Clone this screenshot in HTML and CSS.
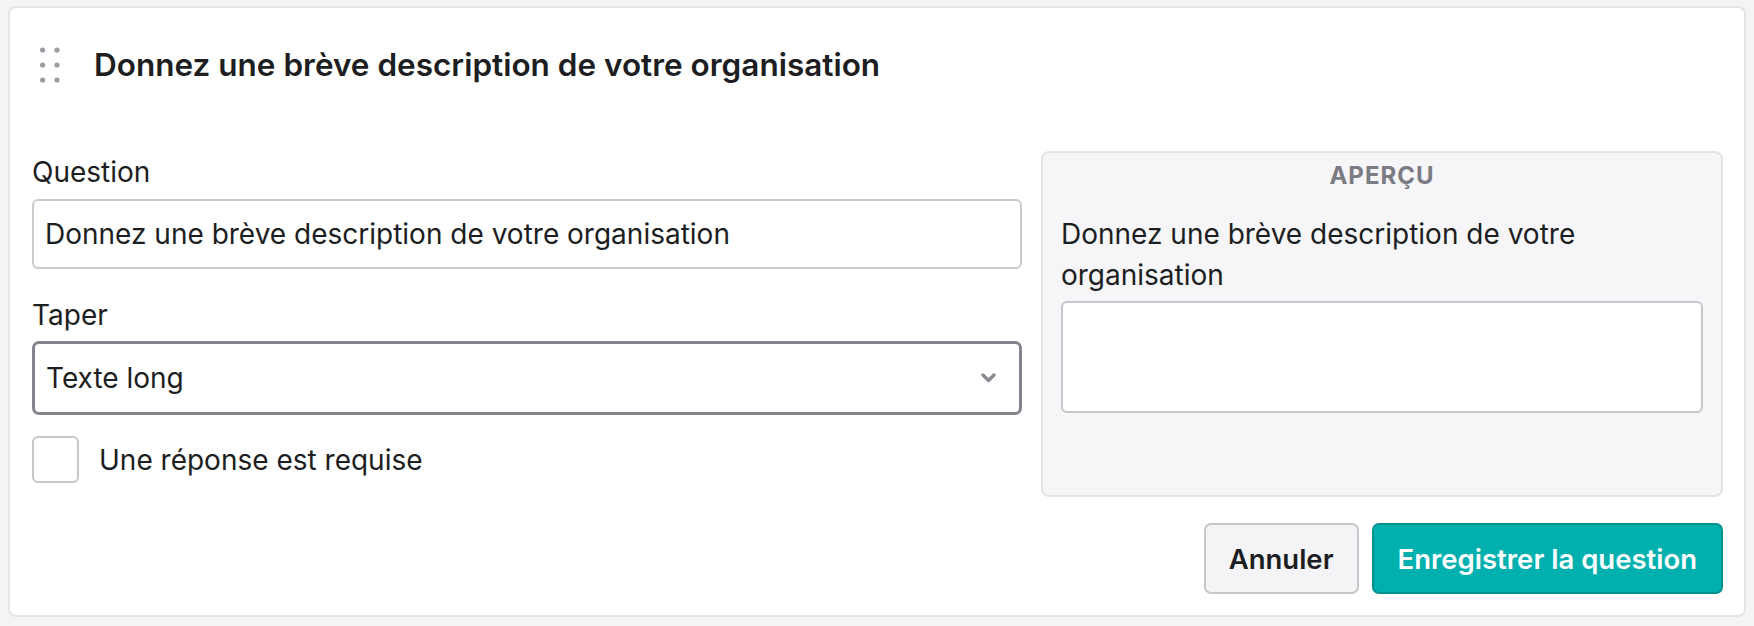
FILE: index.html
```html
<!DOCTYPE html>
<html lang="fr">
<head>
    <meta charset="UTF-8">
    <meta name="viewport" content="width=device-width, initial-scale=1.0">
    <title>Modifier la question</title>
    <link rel="stylesheet" href="styles.css">
</head>
<body>
    <div class="card">
        <div class="card-header">
            <!-- drag handle -->
            <svg class="handle" width="20" height="36" viewBox="0 0 20 36">
                <circle cx="2.6" cy="3" r="2.6"/>
                <circle cx="17" cy="3" r="2.6"/>
                <circle cx="2.6" cy="18" r="2.6"/>
                <circle cx="17" cy="18" r="2.6"/>
                <circle cx="2.6" cy="33" r="2.6"/>
                <circle cx="17" cy="33" r="2.6"/>
            </svg>
            <h2 class="card-title">Donnez une brève description de votre organisation</h2>
        </div>

        <div class="editor">
            <div class="fields">
                <label class="field-label" for="question">Question</label>
                <input class="text-input" id="question" type="text" value="Donnez une brève description de votre organisation">

                <label class="field-label type-label" for="type">Taper</label>
                <div class="select">
                    <span>Texte long</span>
                    <svg class="chevron" width="15" height="10" viewBox="0 0 15 10">
                        <path d="M2 2 L7.5 7.5 L13 2" fill="none" stroke="currentColor" stroke-width="3.4" stroke-linecap="round" stroke-linejoin="round"/>
                    </svg>
                </div>

                <label class="check-row">
                    <span class="checkbox"></span>
                    <span>Une réponse est requise</span>
                </label>
            </div>

            <div class="preview">
                <div class="preview-title">APERÇU</div>
                <p class="preview-question">Donnez une brève description de votre organisation</p>
                <div class="preview-area"></div>
            </div>
        </div>

        <div class="actions">
            <button class="btn btn-cancel">Annuler</button>
            <button class="btn btn-save">Enregistrer la question</button>
        </div>
    </div>
</body>
</html>
```

FILE: styles.css
```css
body {
    margin: 0;
    padding: 6px 8px 0;
    background: #f4f4f6;
    font-family: 'Inter', 'Noto Sans', sans-serif;
    color: #1d1e22;
}

.card {
    background: #fff;
    border: 2px solid #e4e4e7;
    border-radius: 8px;
    padding: 0 21px 21px 22px;
}

.card-header {
    display: flex;
    align-items: center;
    padding: 33px 0;
}

.handle {
    fill: #9b9ba3;
    margin-left: 8px;
    flex-shrink: 0;
}

.card-title {
    margin: 0 0 0 34px;
    font-size: 31.5px;
    line-height: 48px;
    font-weight: 600;
}

.editor {
    display: grid;
    grid-template-columns: 1fr 682px;
    gap: 19px;
    margin-top: 29px;
}

.fields {
    display: flex;
    flex-direction: column;
}

.field-label {
    font-size: 28px;
    line-height: 42px;
    margin-bottom: 6px;
}

.type-label {
    margin-top: 25px;
    margin-bottom: 5px;
}

.text-input {
    height: 70px;
    box-sizing: border-box;
    border: 2px solid #c9c9ce;
    border-radius: 6px;
    padding: 0 11px;
    font-family: inherit;
    font-size: 28px;
    color: #1d1e22;
    background: #fff;
}

.select {
    height: 74px;
    box-sizing: border-box;
    border: 3px solid #84848c;
    border-radius: 7px;
    padding: 0 23px 0 11px;
    display: flex;
    align-items: center;
    justify-content: space-between;
    font-size: 28px;
}

.chevron {
    color: #8a8a92;
}

.check-row {
    display: flex;
    align-items: center;
    gap: 20px;
    margin: 21px 0 14px;
    font-size: 28px;
}

.checkbox {
    width: 47px;
    height: 47px;
    box-sizing: border-box;
    border: 2px solid #c6c6cb;
    border-radius: 6px;
    background: #fff;
}

.preview {
    background: #f6f6f8;
    border: 2px solid #e4e4e7;
    border-radius: 8px;
    padding: 6px 18px 0;
}

.preview-title {
    text-align: center;
    font-size: 24px;
    line-height: 33px;
    font-weight: 700;
    letter-spacing: 1px;
    color: #7b7b84;
}

.preview-question {
    margin: 22px 0 5px;
    font-size: 28px;
    line-height: 41px;
}

.preview-area {
    height: 112px;
    box-sizing: border-box;
    border: 2px solid #c6c6cb;
    border-radius: 6px;
    background: #fff;
}

.actions {
    display: flex;
    justify-content: flex-end;
    gap: 13px;
    margin-top: 26px;
}

.btn {
    height: 71px;
    padding: 0 24px;
    border-radius: 7px;
    font-family: inherit;
    font-size: 27.5px;
    font-weight: 600;
    cursor: pointer;
}

.btn-cancel {
    background: #f4f4f6;
    border: 2px solid #c6c6cb;
    color: #1d1e22;
    padding: 0 23px;
}

.btn-save {
    background: #00b0ae;
    border: 2px solid #00908d;
    color: #fff;
}
```
